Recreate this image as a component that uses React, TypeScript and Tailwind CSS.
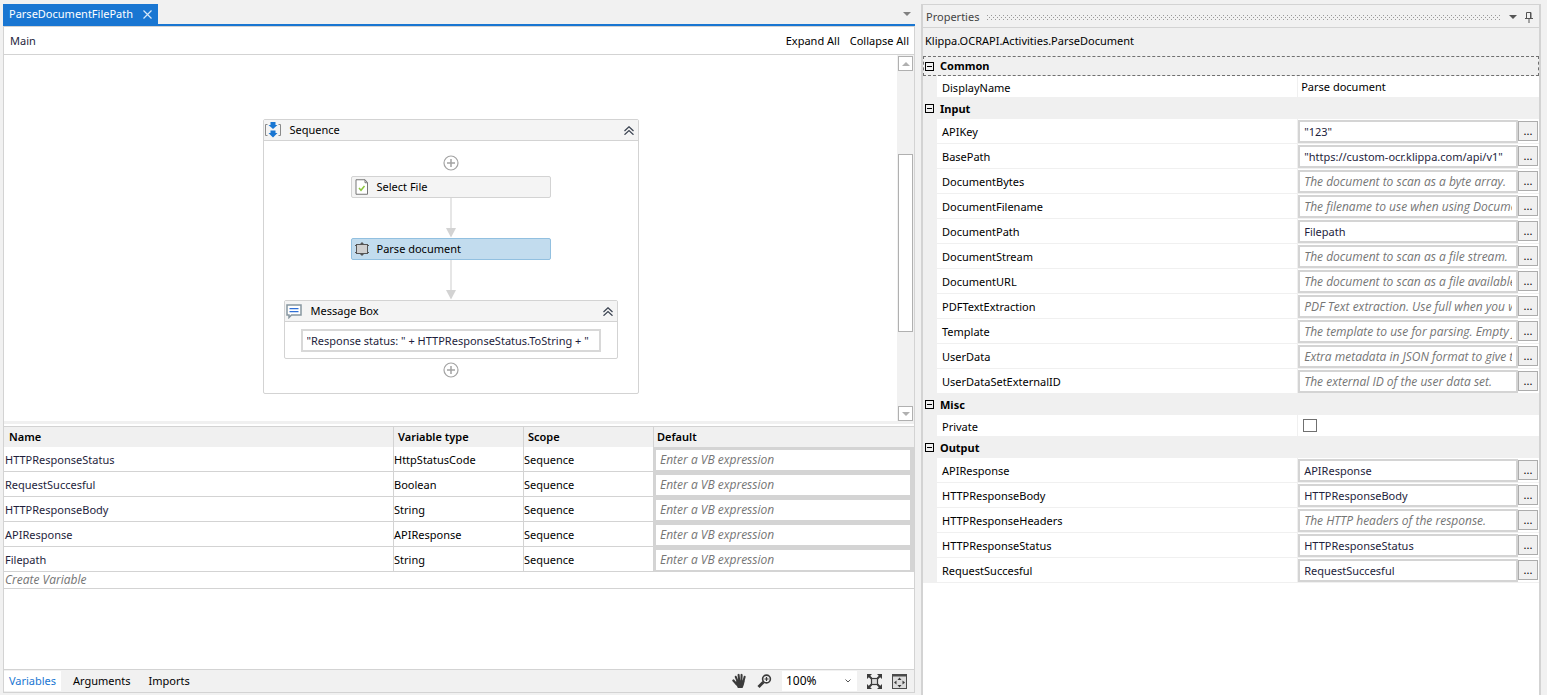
import { useState } from "react";
import type { ReactNode } from "react";

interface Variable {
  name: string;
  type: string;
  scope: string;
}

interface Property {
  name: string;
  kind: "plain" | "expression" | "check";
  value?: string;
  hint?: string;
}

interface Category {
  title: string;
  focused?: boolean;
  properties: Property[];
}

const variables: Variable[] = [
  { name: "HTTPResponseStatus", type: "HttpStatusCode", scope: "Sequence" },
  { name: "RequestSuccesful", type: "Boolean", scope: "Sequence" },
  { name: "HTTPResponseBody", type: "String", scope: "Sequence" },
  { name: "APIResponse", type: "APIResponse", scope: "Sequence" },
  { name: "Filepath", type: "String", scope: "Sequence" },
];

const categories: Category[] = [
  {
    title: "Common",
    focused: true,
    properties: [{ name: "DisplayName", kind: "plain", value: "Parse document" }],
  },
  {
    title: "Input",
    properties: [
      { name: "APIKey", kind: "expression", value: '"123"' },
      { name: "BasePath", kind: "expression", value: '"https://custom-ocr.klippa.com/api/v1"' },
      { name: "DocumentBytes", kind: "expression", hint: "The document to scan as a byte array." },
      { name: "DocumentFilename", kind: "expression", hint: "The filename to use when using DocumentBytes." },
      { name: "DocumentPath", kind: "expression", value: "Filepath" },
      { name: "DocumentStream", kind: "expression", hint: "The document to scan as a file stream." },
      { name: "DocumentURL", kind: "expression", hint: "The document to scan as a file available online." },
      { name: "PDFTextExtraction", kind: "expression", hint: "PDF Text extraction. Use full when you want" },
      { name: "Template", kind: "expression", hint: "The template to use for parsing. Empty for default." },
      { name: "UserData", kind: "expression", hint: "Extra metadata in JSON format to give to the parser." },
      { name: "UserDataSetExternalID", kind: "expression", hint: "The external ID of the user data set." },
    ],
  },
  { title: "Misc", properties: [{ name: "Private", kind: "check" }] },
  {
    title: "Output",
    properties: [
      { name: "APIResponse", kind: "expression", value: "APIResponse" },
      { name: "HTTPResponseBody", kind: "expression", value: "HTTPResponseBody" },
      { name: "HTTPResponseHeaders", kind: "expression", hint: "The HTTP headers of the response." },
      { name: "HTTPResponseStatus", kind: "expression", value: "HTTPResponseStatus" },
      { name: "RequestSuccesful", kind: "expression", value: "RequestSuccesful" },
    ],
  },
];

/* Icons */

function SequenceIcon() {
  return (
    <svg width="16" height="16" viewBox="0 0 16 16" fill="none">
      <path d="M2.500 2.500H.5v11h2M13.500 2.500h2v11h-2" stroke="#8a8a8a" />
      <path d="M5.500 0h5v3H12.500L8 7 3.500 3h2zM5.500 8.500h5v2.500h2L8 15.500 3.500 11h2z" fill="#1976d2" />
    </svg>
  );
}

function FileCheckIcon() {
  return (
    <svg width="14" height="16" viewBox="0 0 14 16" fill="none">
      <path d="M1 .75h9L12.500 3.500v11.750H1z" fill="#fff" stroke="#777" />
      <path d="M10 .75v3h2.500" stroke="#777" />
      <path d="M4 9l2 2.250L9.500 7" stroke="#8cc63f" strokeWidth="1.500" />
    </svg>
  );
}

function ActivityIcon() {
  return (
    <svg width="14" height="14" viewBox="0 0 14 14" fill="none">
      <path d="M7 0l2.500 2.500h-5zM7 14l2.500-2.500h-5z" fill="#555" />
      <rect x="1.500" y="2.500" width="11" height="9" fill="#cfcfcf" stroke="#555" />
      <path d="M0 3.500h1.500M0 10.500h1.500M12.500 3.500H14M12.500 10.500H14" stroke="#555" />
    </svg>
  );
}

function MessageIcon() {
  return (
    <svg width="16" height="15" viewBox="0 0 16 15" fill="none">
      <path d="M1 1h14v10H5.500L3 13.500V11H1z" fill="#fff" stroke="#8796a0" strokeWidth="1.500" />
      <path d="M3.500 4.500h9M3.500 7.500h9" stroke="#2f6fd6" strokeWidth="1.250" />
    </svg>
  );
}

function CollapseIcon() {
  return (
    <svg width="10" height="9" viewBox="0 0 10 9" fill="none" stroke="#3a4250" strokeWidth="1.200">
      <path d="M.5 5L5 .75 9.500 5M.5 8.750L5 4.500l4.500 4.250" />
    </svg>
  );
}

function HandIcon() {
  return (
    <svg width="15" height="16" viewBox="0 0 16 16" fill="none" stroke="#3b3b3b" strokeLinecap="round">
      <path d="M4 3.500L6 8.500M7 1.500l.75 6.500M10.250 1.500L10 8M13.500 3.500L12 9" strokeWidth="2.200" />
      <path d="M1.500 7.500L5 11.500" strokeWidth="2.400" />
      <path d="M5 7.500h8.250c0 3-.5 5-2 8H6.250C5.500 13.500 4.500 12 3.500 11z" fill="#3b3b3b" stroke="none" />
    </svg>
  );
}

function ZoomIcon() {
  return (
    <svg width="15" height="15" viewBox="0 0 15 15" fill="none" stroke="#3b3b3b">
      <circle cx="9.500" cy="5" r="3.900" strokeWidth="1.600" />
      <path d="M9.500 3v4M7.500 5h4" strokeWidth="1.200" />
      <path d="M6.500 8L1.500 13" strokeWidth="3" />
    </svg>
  );
}

function FitIcon() {
  return (
    <svg width="15" height="15" viewBox="0 0 15 15" fill="none" stroke="#3b3b3b">
      <rect x="4.500" y="4.500" width="6" height="6" fill="#dcdcdc" strokeWidth="1.200" />
      <path d="M1 1l3.500 3.500M14 1l-3.500 3.500M1 14l3.500-3.500M14 14l-3.500-3.500" strokeWidth="2" />
      <path d="M0 0h5L0 5zM15 0h-5l5 5zM0 15h5l-5-5zM15 15h-5l5-5z" fill="#3b3b3b" stroke="none" />
    </svg>
  );
}

function OverviewIcon() {
  return (
    <svg width="15" height="15" viewBox="0 0 15 15" fill="none">
      <rect x=".5" y=".5" width="14" height="14" fill="#dcdcdc" stroke="#4a4a4a" />
      <path d="M0 1.500h15" stroke="#4a4a4a" strokeWidth="2" />
      <path d="M7.500 3.500l2 2.500h-4zM7.500 13.500l2-2.500h-4zM2 8.500l2.500-2v4zM13 8.500l-2.500-2v4z" fill="#3b3b3b" />
    </svg>
  );
}

function PinIcon() {
  return (
    <svg width="8" height="11" viewBox="0 0 8 11" fill="none" stroke="#555">
      <path d="M1.500 6.500v-6h4.500v6M5.500.5v6M0 6.500h8M4 6.500V11" />
    </svg>
  );
}

function Triangle({ up = false, color }: { up?: boolean; color: string }) {
  return (
    <svg width="8" height="4" viewBox="0 0 8 4" fill={color}>
      <path d={up ? "M0 4h8L4 0z" : "M0 0h8L4 4z"} />
    </svg>
  );
}

/* Workflow designer */

function AddPoint() {
  return (
    <button type="button" aria-label="Add activity" className="block">
      <svg width="16" height="16" viewBox="0 0 16 16" fill="none" stroke="#a3a3a3">
        <circle cx="8" cy="8" r="7" strokeWidth="1.200" />
        <path d="M8 4v8M4 8h8" strokeWidth="1.500" />
      </svg>
    </button>
  );
}

function Connector() {
  return (
    <svg width="10" height="40" viewBox="0 0 10 40">
      <path d="M4 0h2v30H4z" fill="#e6e6e6" />
      <path d="M0 30h10L5 39.500z" fill="#d3d3d3" />
    </svg>
  );
}

function ActivityHeader({ icon, title }: { icon: ReactNode; title: string }) {
  return (
    <div className="flex h-[21px] items-center border-b border-[#d3d3d3] bg-[#f4f4f4] pl-px pr-1">
      <span className="flex w-[25px] shrink-0">{icon}</span>
      <span className="flex-1">{title}</span>
      <button type="button" aria-label={`Collapse ${title}`}>
        <CollapseIcon />
      </button>
    </div>
  );
}

function Activity({ icon, title, selected = false }: { icon: ReactNode; title: string; selected?: boolean }) {
  return (
    <div
      className={`flex h-[22px] w-[200px] items-center rounded-xs border pl-[3px] ${
        selected ? "border-[#92c0e0] bg-[#c2dcee]" : "border-[#d3d3d3] bg-[#f4f4f4]"
      }`}
    >
      <span className="flex w-[22px] shrink-0">{icon}</span>
      {title}
    </div>
  );
}

function Designer() {
  return (
    <div className="flex flex-1 bg-white">
      <div className="flex flex-1 justify-center pb-6 pt-16">
        <div className="w-[376px] self-start rounded-xs border border-[#d3d3d3]">
          <ActivityHeader icon={<SequenceIcon />} title="Sequence" />
          <div className="flex flex-col items-center pb-[15px] pt-[14px]">
            <AddPoint />
            <div className="mt-[5px]">
              <Activity icon={<FileCheckIcon />} title="Select File" />
            </div>
            <Connector />
            <Activity icon={<ActivityIcon />} title="Parse document" selected />
            <Connector />
            <div className="mb-[3px] w-[334px] rounded-xs border border-[#d3d3d3]">
              <ActivityHeader icon={<MessageIcon />} title="Message Box" />
              <div className="px-4 pb-[6px] pt-[7px]">
                <input
                  aria-label="Message text"
                  className="block h-[23px] w-full border-2 border-[#d8d8d8] bg-white px-1 text-[#1e1e3c] outline-none"
                  defaultValue={'"Response status: " + HTTPResponseStatus.ToString + "'}
                />
              </div>
            </div>
            <AddPoint />
          </div>
        </div>
      </div>

      {/* Vertical scrollbar */}
      <div className="flex w-[17px] flex-col items-center bg-[#f1f1f1] pt-px">
        <button type="button" aria-label="Scroll up" className="flex h-[15px] w-[15px] items-center justify-center border border-[#b0b0b0] bg-white">
          <Triangle up color="#b0b0b0" />
        </button>
        <div className="flex flex-1 flex-col pt-[83px]">
          <div className="h-[178px] w-[15px] border border-[#b0b0b0] bg-white" />
        </div>
        <button type="button" aria-label="Scroll down" className="flex h-[15px] w-[15px] items-center justify-center border border-[#b0b0b0] bg-white">
          <Triangle color="#b0b0b0" />
        </button>
      </div>
    </div>
  );
}

function VariablesTable() {
  return (
    <table className="w-full table-fixed border-separate border-spacing-0 text-left">
      <colgroup>
        <col />
        <col className="w-[130px]" />
        <col className="w-[130px]" />
        <col className="w-[260px]" />
      </colgroup>
      <thead>
        <tr className="h-5 bg-[#f0f0f0]">
          <th className="border-r border-[#d3d3d3] px-[5px] font-semibold">Name</th>
          <th className="border-r border-[#d3d3d3] px-1 font-semibold">Variable type</th>
          <th className="border-r border-[#d3d3d3] px-1 font-semibold">Scope</th>
          <th className="px-[3px] font-semibold">Default</th>
        </tr>
      </thead>
      <tbody>
        {variables.map((v) => (
          <tr key={v.name} className="h-[25px]">
            <td className="border-b border-r border-[#d3d3d3] px-px pt-0.5 text-[#1e1e3c]">{v.name}</td>
            <td className="border-b border-r border-[#d3d3d3] pt-0.5">{v.type}</td>
            <td className="border-b border-r border-[#d3d3d3] pt-0.5">{v.scope}</td>
            <td className="bg-[#d4d4d4] p-0">
              <input
                aria-label={`Default of ${v.name}`}
                placeholder="Enter a VB expression"
                className="ml-0.5 block h-5 w-[254px] bg-white px-1 font-['Open_Sans',sans-serif] text-[12px] outline-none placeholder:italic placeholder:text-[#757575]"
              />
            </td>
          </tr>
        ))}
        <tr className="h-[17px]">
          <td
            colSpan={4}
            className="border-b border-[#d3d3d3] px-px font-['Open_Sans',sans-serif] text-[12px] italic text-[#757575]"
          >
            Create Variable
          </td>
        </tr>
      </tbody>
    </table>
  );
}

function StatusBar() {
  return (
    <div className="flex h-[23px] items-center border-t border-[#d3d3d3]">
      <button type="button" className="h-5 w-[57px] bg-white text-[#1976d2]">
        Variables
      </button>
      <button type="button" className="ml-3">
        Arguments
      </button>
      <button type="button" className="ml-[18px]">
        Imports
      </button>
      <div className="ml-auto flex items-center gap-[10px] pr-[7px]">
        <button type="button" aria-label="Pan">
          <HandIcon />
        </button>
        <button type="button" aria-label="Reset zoom">
          <ZoomIcon />
        </button>
        <span className="relative">
          <select aria-label="Zoom level" className="block h-5 w-[75px] appearance-none bg-white pl-1 text-[12px] outline-none">
            <option>100%</option>
            <option>150%</option>
            <option>200%</option>
          </select>
          <svg className="pointer-events-none absolute right-[6px] top-2" width="6" height="4" viewBox="0 0 6 4" fill="none" stroke="#555">
            <path d="M.5.5L3 3 5.500.5" />
          </svg>
        </span>
        <button type="button" aria-label="Fit to screen">
          <FitIcon />
        </button>
        <button type="button" aria-label="Overview">
          <OverviewIcon />
        </button>
      </div>
    </div>
  );
}

/* Properties panel */

function PropertyRow({ category, property }: { category: string; property: Property }) {
  const id = `${category}-${property.name}`;
  const tall = property.kind === "expression";
  return (
    <div
      className={`grid grid-cols-[14px_minmax(0,3fr)_minmax(0,2fr)] ${
        tall ? "h-[25px]" : "h-[22px]"
      }`}
    >
      <div className="bg-[#f0f0f0]" />
      <label htmlFor={id} className="flex items-center border-b border-r border-[#f0f0f0] pl-[5px] pt-0.5">
        {property.name}
      </label>
      <div className="flex items-center border-b border-[#f0f0f0] pr-px">
        {property.kind === "plain" && (
          <input id={id} defaultValue={property.value} className="w-full px-[3px] outline-none" />
        )}
        {property.kind === "check" && (
          <input
            id={id}
            type="checkbox"
            className="ml-[5px] h-[13px] w-[14px] appearance-none border border-[#707070] bg-white checked:bg-[#1976d2]"
          />
        )}
        {tall && (
          <>
            <input
              id={id}
              defaultValue={property.value}
              placeholder={property.hint}
              className={`h-[23px] min-w-0 flex-1 border-2 border-[#d4d4d4] bg-white px-1 text-[#1e1e3c] outline-none placeholder:italic placeholder:text-[#757575] ${
                property.hint ? "font-['Open_Sans',sans-serif] text-[12px]" : ""
              }`}
            />
            <button
              type="button"
              aria-label={`Edit ${property.name}`}
              className="h-5 w-5 border border-[#acacac] bg-[#f0f0f0] leading-4"
            >
              ...
            </button>
          </>
        )}
      </div>
    </div>
  );
}

function PropertyCategory({ category }: { category: Category }) {
  const [open, setOpen] = useState(true);
  return (
    <section>
      <button
        type="button"
        aria-expanded={open}
        onClick={() => setOpen(!open)}
        className={`flex w-full items-center gap-[6px] border bg-[#f0f0f0] px-px text-left font-bold ${
          category.focused ? "h-5 border-dashed border-[#707070]" : "h-[21px] border-[#f0f0f0]"
        }`}
      >
        <svg width="9" height="9" viewBox="0 0 9 9" fill="none" stroke="#000">
          <rect x=".5" y=".5" width="8" height="8" />
          <path d={open ? "M2 4.500h5" : "M2 4.500h5M4.500 2v5"} />
        </svg>
        {category.title}
      </button>
      {open &&
        category.properties.map((p) => (
          <PropertyRow key={p.name} category={category.title} property={p} />
        ))}
    </section>
  );
}

function PropertiesPanel() {
  return (
    <aside className="mt-1 flex flex-col border-2 border-b-0 border-t border-[#d3d3d3] bg-white">
      <div className="flex h-[23px] items-center border-b border-[#d3d3d3] bg-[#f1f1f1] pl-[3px] pr-[6px] pt-0.5 text-[#444]">
        <h2>Properties</h2>
        <svg className="ml-2 h-[5px] min-w-0 flex-1">
          <defs>
            <pattern id="grip" width="4" height="4" patternUnits="userSpaceOnUse">
              <path d="M0 0h1v1H0zM2 2h1v1H2z" fill="#999" />
            </pattern>
          </defs>
          <rect width="100%" height="5" fill="url(#grip)" />
        </svg>
        <button type="button" aria-label="Panel menu" className="ml-2">
          <Triangle color="#555" />
        </button>
        <button type="button" aria-label="Pin panel" className="ml-2">
          <PinIcon />
        </button>
      </div>
      <p className="h-7 bg-[#f0f0f0] pl-0.5 leading-[26px]">Klippa.OCRAPI.Activities.ParseDocument</p>
      {categories.map((c) => (
        <PropertyCategory key={c.title} category={c} />
      ))}
    </aside>
  );
}

export default function App() {
  return (
    <div className="grid min-h-screen grid-cols-[minmax(0,912fr)_minmax(0,620fr)] gap-[6px] bg-[#f1f1f1] pl-[3px] pr-[6px] font-['Noto_Sans','Open_Sans',sans-serif] text-[11px] leading-4 text-black">
      <main className="flex flex-col pb-0.5 pt-1">
        {/* Document tabs */}
        <div className="flex items-center justify-between border-b-2 border-[#1976d2] pr-1">
          <div className="flex h-5 items-center gap-[10px] bg-[#1976d2] px-[6px] text-white">
            <span>ParseDocumentFilePath</span>
            <button type="button" aria-label="Close tab">
              <svg width="9" height="9" viewBox="0 0 9 9" stroke="#d6e8fa" strokeWidth="1.200">
                <path d="M.5.5l8 8M8.500.5l-8 8" />
              </svg>
            </button>
          </div>
          <button type="button" aria-label="Open documents">
            <Triangle color="#808080" />
          </button>
        </div>

        <div className="flex flex-1 flex-col border border-[#d3d3d3]">
          <div className="flex h-7 items-center border-b border-[#d3d3d3] bg-white pl-[6px] pr-[5px]">
            <span className="flex-1 text-[#1e1e3c]">Main</span>
            <button type="button">Expand All</button>
            <button type="button" className="ml-[10px]">
              Collapse All
            </button>
          </div>
          <Designer />
          <div className="h-[5px] border-b-2 border-white bg-[#f0f0f0]" />
          <div className="h-[243px] border-t border-[#d3d3d3] bg-white">
            <VariablesTable />
          </div>
          <StatusBar />
        </div>
      </main>
      <PropertiesPanel />
    </div>
  );
}
